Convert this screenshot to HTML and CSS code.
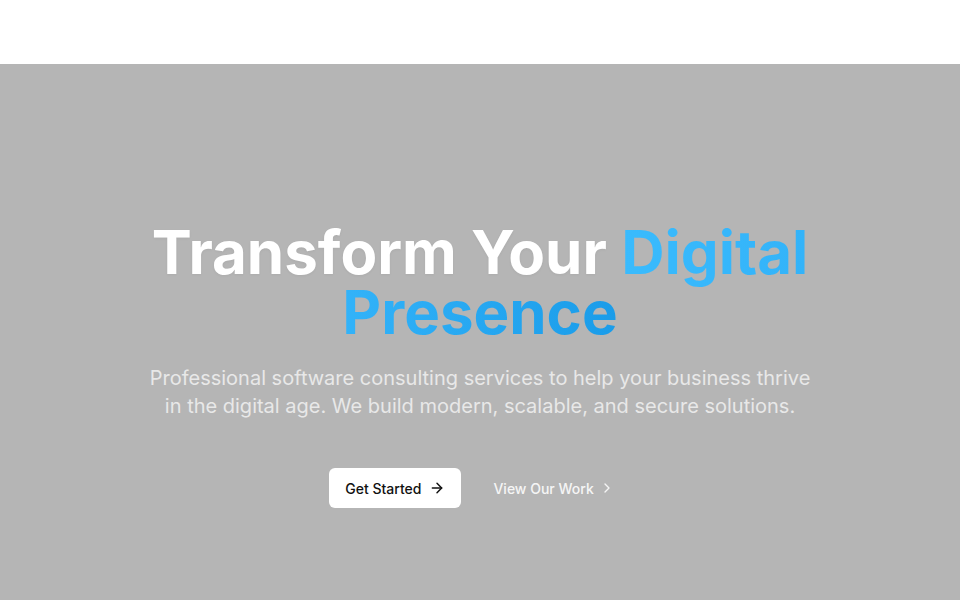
FILE: index.html
```html
<!DOCTYPE html>
<html lang="en">
<head>
  <meta charset="UTF-8" />
  <meta name="viewport" content="width=device-width, initial-scale=1.0"/>
  <title>Consulting</title>
  <link rel="stylesheet" href="styles.css">
</head>
<body>
  <!-- Thanh điều hướng trên cùng (trống) -->
  <header class="topbar"></header>

  <!-- Khu vực hero -->
  <section class="hero">
    <h1 class="hero-title">
      Transform Your <span class="accent">Digital Presence</span>
    </h1>
    <p class="hero-text">
      Professional software consulting services to help your business thrive
      in the digital age. We build modern, scalable, and secure solutions.
    </p>
    <div class="hero-actions">
      <a href="#" class="btn-primary">
        Get Started
        <svg width="16" height="16" viewBox="0 0 24 24" fill="none" stroke="currentColor" stroke-width="2.2" stroke-linecap="round" stroke-linejoin="round">
          <path d="M5 12h14"/><path d="M12 5l7 7-7 7"/>
        </svg>
      </a>
      <a href="#" class="btn-link">
        View Our Work
        <svg width="16" height="16" viewBox="0 0 24 24" fill="none" stroke="currentColor" stroke-width="2" stroke-linecap="round" stroke-linejoin="round">
          <path d="M9 6l6 6-6 6"/>
        </svg>
      </a>
    </div>
  </section>
</body>
</html>
```

FILE: styles.css
```css
/* Thiết lập chung */
body {
  margin: 0;
  font-family: Inter, 'Noto Sans', sans-serif;
  background-color: #ffffff;
}

.topbar {
  height: 64px;
  background: #ffffff;
}

/* Hero */
.hero {
  background-color: #b5b5b5;
  height: 536px;
  box-sizing: border-box;
  padding-top: 158px;
  display: flex;
  flex-direction: column;
  align-items: center;
  text-align: center;
}

.hero-title {
  margin: 0;
  max-width: 680px;
  font-size: 60px;
  line-height: 60px;
  font-weight: 700;
  color: #ffffff;
  text-shadow: 0 1px 3px rgba(0,0,0,0.05);
}

/* Chữ màu xanh chuyển sắc */
.accent {
  background: linear-gradient(90deg, #3abbfd, #33b3f9 40%, #1a9ce9);
  -webkit-background-clip: text;
  background-clip: text;
  color: transparent;
  text-shadow: none;
}

.hero-text {
  margin: 22px 0 0;
  max-width: 672px;
  font-size: 20px;
  line-height: 28px;
  color: #e8e8e8;
}

/* Nút bấm */
.hero-actions {
  margin-top: 48px;
  display: flex;
  align-items: center;
  gap: 16px;
}

.btn-primary {
  display: flex;
  align-items: center;
  gap: 8px;
  height: 40px;
  padding: 0 16px;
  box-sizing: border-box;
  background: #ffffff;
  color: #111111;
  border-radius: 6px;
  font-size: 14px;
  font-weight: 500;
  text-decoration: none;
}

.btn-link {
  display: flex;
  align-items: center;
  gap: 5px;
  height: 40px;
  padding: 0 16px;
  box-sizing: border-box;
  color: #f5f5f5;
  font-size: 14px;
  font-weight: 500;
  text-decoration: none;
}
```
